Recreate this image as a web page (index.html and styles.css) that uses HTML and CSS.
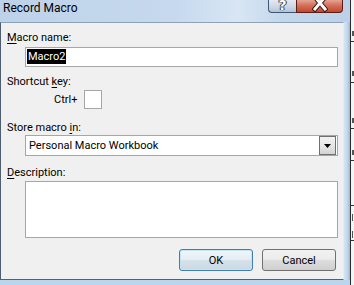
FILE: index.html
```html
<!DOCTYPE html>
<html lang="en">
<head>
    <meta charset="UTF-8">
    <title>Record Macro</title>
    <link rel="stylesheet" href="styles.css">
</head>
<body>
    <div class="screen">
        <div class="window">
            <div class="titlebar">
                <span class="title">Record Macro</span>
                <div class="caption-btns">
                    <span class="cap help">?</span>
                    <span class="cap close">
                        <svg width="16" height="12" viewBox="0 0 16 12">
                            <path d="M3,-3 L13,9 M13,-3 L3,9" stroke="#3b1a14" stroke-width="5" stroke-linecap="square"></path>
                            <path d="M3,-3 L13,9 M13,-3 L3,9" stroke="#ffffff" stroke-width="3" stroke-linecap="square"></path>
                        </svg>
                    </span>
                </div>
            </div>
            <div class="frame-row">
                <div class="client">
                    <div class="lbl"><u>M</u>acro name:</div>
                    <div class="field name-field"><span class="sel">Macro2</span></div>

                    <div class="lbl lbl-key">Shortcut <u>k</u>ey:</div>
                    <div class="shortcut"><span class="ctrl">Ctrl+</span><span class="keybox"></span></div>

                    <div class="lbl lbl-store">Store macro <u>i</u>n:</div>
                    <div class="field combo">
                        <span class="combo-text">Personal Macro Workbook</span>
                        <span class="combo-btn">
                            <svg width="7" height="4" viewBox="0 0 7 4"><path d="M0,0 L7,0 L3.5,4 Z" fill="#000"></path></svg>
                        </span>
                    </div>

                    <div class="lbl lbl-desc"><u>D</u>escription:</div>
                    <div class="field desc"></div>

                    <div class="actions">
                        <button class="btn ok">OK</button>
                        <button class="btn">Cancel</button>
                    </div>
                </div>
                <div class="frame-right"></div>
            </div>
            <div class="frame-bottom"></div>
        </div>
        <div class="backdrop">
            <svg width="4" height="285" viewBox="0 0 4 285">
                <rect x="0" y="0" width="4" height="285" fill="#f4f4f4"></rect>
                <rect x="0" y="0" width="1" height="285" fill="#2c2c2c"></rect>
                <rect x="1" y="41" width="3" height="1" fill="#333"></rect>
                <rect x="1" y="82" width="3" height="1" fill="#333"></rect>
                <rect x="1" y="128" width="3" height="1" fill="#333"></rect>
                <rect x="1" y="160" width="3" height="1" fill="#333"></rect>
                <rect x="1" y="205" width="3" height="1" fill="#333"></rect>
                <rect x="1" y="240" width="3" height="1" fill="#333"></rect>
                <rect x="2" y="31" width="2" height="5" fill="#555"></rect>
                <rect x="2" y="71" width="2" height="5" fill="#555"></rect>
                <rect x="2" y="118" width="2" height="5" fill="#555"></rect>
                <rect x="2" y="150" width="2" height="5" fill="#555"></rect>
                <rect x="2" y="214" width="1" height="7" fill="#555"></rect>
                <rect x="2" y="231" width="1" height="7" fill="#555"></rect>
            </svg>
        </div>
    </div>
</body>
</html>
```

FILE: styles.css
```css
body { margin: 0; padding: 0; font-family: 'Roboto', 'Noto Sans', sans-serif; font-size: 11px; color: #000; overflow: hidden; }
.screen { display: flex; width: 354px; height: 285px; overflow: hidden; }
.window { width: 350px; display: flex; flex-direction: column; background-color: #c2d7ed; }
.titlebar { height: 22px; flex-shrink: 0; display: flex; justify-content: space-between; align-items: flex-start; padding-right: 7px; background: linear-gradient(90deg, #bdd2e9 0%, #c6d9ee 50%, #d8e6f4 68%, #c4d8ed 80%, #bcd1e8 100%); }
.title { padding: 1px 0 0 3px; line-height: 14px; font-size: 12px; }
.caption-btns { display: flex; height: 13px; }
.cap { box-sizing: border-box; height: 13px; display: flex; justify-content: center; align-items: flex-end; overflow: hidden; border: 1px solid #3f5670; border-top: none; }
.cap.help { width: 28px; border-radius: 0 0 0 4px; border-right: none; background: linear-gradient(180deg, #e3eaf2 0%, #cdd8e5 55%, #b3c3d6 100%); color: #fff; font: bold 14px/14px 'DejaVu Sans', sans-serif; text-shadow: 0 0 1px #2d3b4c, 0 0 1px #2d3b4c, 1px 0 0 #2d3b4c, -1px 0 0 #2d3b4c; }
.cap.close { width: 47px; border-radius: 0 0 4px 0; border-color: #5c1d14; background: linear-gradient(180deg, #e6a393 0%, #d4705b 45%, #c24630 100%); }
.cap.close svg { display: block; }
.frame-row { display: flex; height: 258px; flex-shrink: 0; }
.client { box-sizing: border-box; width: 344px; height: 258px; border: 1px solid; border-color: #8fa2b5 #e4ebf2 #53606d #4f5e6e; background-color: #f0f0f0; padding: 7px 5px 0 6px; display: flex; flex-direction: column; }
.frame-right { flex: 1; background: linear-gradient(90deg, #d7e5f3 0%, #bfd5ec 60%, #9fb6cf 100%); }
.frame-bottom { flex: 1; background-color: #bcd5ee; }
.lbl { line-height: 15px; height: 15px; }
.lbl u { text-decoration-thickness: 1px; text-underline-offset: 2px; }
.field { box-sizing: border-box; margin-left: 18px; background-color: #fff; border: 1px solid #a6a6a6; }
.name-field { height: 20px; margin-top: 2px; padding: 1px 0 0 1px; }
.sel { display: inline-block; background-color: #000; color: #fff; line-height: 15px; padding: 0 1px; }
.lbl-key { margin-top: 7px; }
.shortcut { display: flex; align-items: center; height: 19px; margin-top: 1px; padding-left: 47px; }
.ctrl { width: 30px; }
.keybox { box-sizing: border-box; width: 18px; height: 19px; background-color: #fff; border: 1px solid #a6a6a6; }
.lbl-store { margin-top: 11px; }
.combo { height: 21px; display: flex; align-items: center; justify-content: space-between; padding: 0 1px 0 3px; }
.combo-btn { box-sizing: border-box; width: 17px; height: 19px; display: flex; justify-content: center; align-items: center; padding-top: 1px; border: 1px solid #707070; background: linear-gradient(180deg, #f3f3f3 0%, #e6e6e6 50%, #d4d4d4 100%); }
.lbl-desc { margin-top: 9px; }
.desc { height: 57px; margin-top: 1px; }
.actions { display: flex; justify-content: flex-end; gap: 9px; margin-top: 11px; padding-right: 2px; }
.btn { box-sizing: border-box; width: 74px; height: 22px; padding: 0; font: 11px 'Roboto', 'Noto Sans', sans-serif; color: #000; border: 1px solid #707070; border-radius: 3px; background: linear-gradient(180deg, #f2f2f2 0%, #ebebeb 48%, #dddddd 52%, #cfcfcf 100%); }
.btn.ok { border-color: #3c7fb1; box-shadow: inset 0 0 0 1px #c4e5f6; background: linear-gradient(180deg, #f0f5f8 0%, #e6eef3 48%, #d6e2ea 52%, #cbd8e1 100%); }
.backdrop { width: 4px; flex-shrink: 0; }
.backdrop svg { display: block; }
```
